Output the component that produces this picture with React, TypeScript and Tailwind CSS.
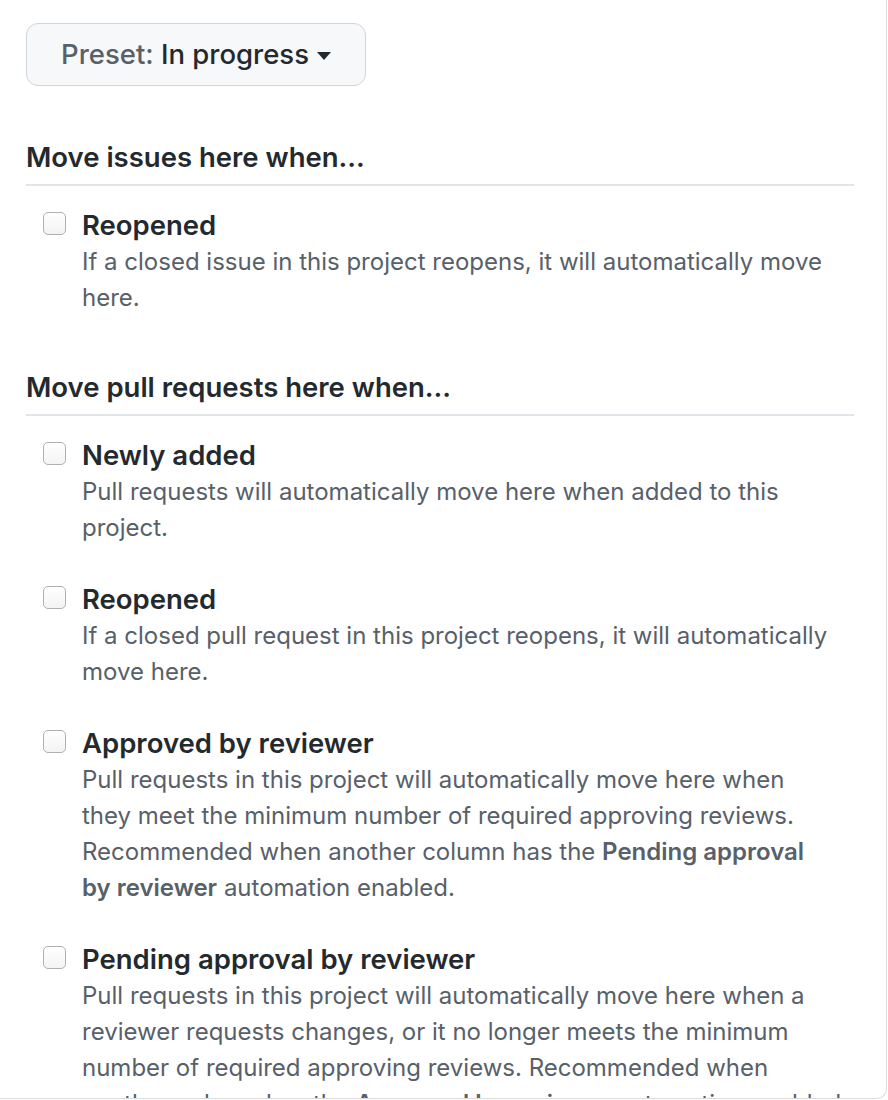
import React from "react";

const Checkbox = () => (
  <span className="mt-[6px] ml-[17px] block h-[23px] w-[23px] shrink-0 rounded-[5px] border border-[#b0b0b0] bg-gradient-to-b from-white to-[#f3f3f3]" />
);

type ItemProps = { title: string; lines: React.ReactNode[] };

const Item = ({ title, lines }: ItemProps) => (
  <div className="flex gap-[16px]">
    <Checkbox />
    <div className="flex flex-col">
      <div className="text-[27.5px] leading-[38px] font-semibold text-[#24292e]">{title}</div>
      <div className="text-[24px] leading-[36px] text-[#586069]">
        {lines.map((l, i) => (
          <div key={i} className="whitespace-nowrap">
            {l}
          </div>
        ))}
      </div>
    </div>
  </div>
);

const Heading = ({ children }: { children: React.ReactNode }) => (
  <div className="border-b-2 border-[#e1e4e8] pb-[9px] text-[27.5px] leading-[36px] font-semibold text-[#24292e]">
    {children}
  </div>
);

export default function App() {
  return (
    <div
      className="h-[1100px] w-[888px] overflow-hidden bg-white"
      style={{ fontFamily: 'Inter, "Liberation Sans", Arial, sans-serif' }}
    >
      <div className="h-[1099px] w-[887px] overflow-hidden rounded-br-[10px] border-r border-b border-[#dcdcdc] pt-[23px] pl-[26px] pr-[32px]">
        <button className="flex h-[63px] w-[340px] items-center justify-center gap-[8px] rounded-[12px] border border-[#d1d5da] bg-[#f6f8fa] text-[27.5px] font-medium">
          <span>
            <span className="text-[#586069]">Preset: </span>
            <span className="text-[#24292e]">In progress</span>
          </span>
          <svg width="14" height="8" viewBox="0 0 14 8" className="mt-[2px]">
            <path d="M0 0h14L7 8z" fill="#24292e" />
          </svg>
        </button>

        <div className="mt-[53px]">
          <Heading>Move issues here when...</Heading>
          <div className="mt-[20px]">
            <Item
              title="Reopened"
              lines={[
                "If a closed issue in this project reopens, it will automatically move",
                "here.",
              ]}
            />
          </div>
        </div>

        <div className="mt-[53px]">
          <Heading>Move pull requests here when...</Heading>
          <div className="mt-[20px] flex flex-col gap-[34px]">
            <Item
              title="Newly added"
              lines={[
                "Pull requests will automatically move here when added to this",
                "project.",
              ]}
            />
            <Item
              title="Reopened"
              lines={[
                "If a closed pull request in this project reopens, it will automatically",
                "move here.",
              ]}
            />
            <Item
              title="Approved by reviewer"
              lines={[
                "Pull requests in this project will automatically move here when",
                "they meet the minimum number of required approving reviews.",
                <>
                  Recommended when another column has the <b className="font-semibold">Pending approval</b>
                </>,
                <>
                  <b className="font-semibold">by reviewer</b> automation enabled.
                </>,
              ]}
            />
            <Item
              title="Pending approval by reviewer"
              lines={[
                "Pull requests in this project will automatically move here when a",
                "reviewer requests changes, or it no longer meets the minimum",
                "number of required approving reviews. Recommended when",
                <>
                  another column has the <b className="font-semibold">Approved by reviewer</b> automation enabled.
                </>,
              ]}
            />
          </div>
        </div>
      </div>
    </div>
  );
}
